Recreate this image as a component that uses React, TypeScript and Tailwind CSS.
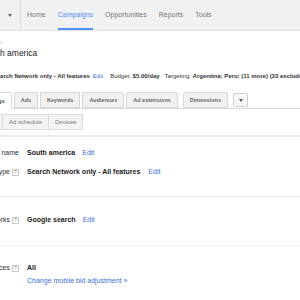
import React from 'react';

const tabs = ['Ads', 'Keywords', 'Audiences', 'Ad extensions', 'Dimensions'];
const navItems = ['Home', 'Campaigns', 'Opportunities', 'Reports', 'Tools'];

const Help: React.FC = () => (
    <span className="ml-[2px] inline-flex h-[7px] w-[7px] shrink-0 items-center justify-center border border-[#c8c8c8] bg-white text-[5px] leading-none text-[#888]">?</span>
);

const Caret: React.FC<{ color?: string }> = ({ color = 'border-t-[#666]' }) => (
    <span className={`inline-block h-0 w-0 border-x-[2px] border-t-[3px] border-x-transparent ${color}`}></span>
);

const SettingRow: React.FC<{ label: string; help?: boolean; children: React.ReactNode }> = ({ label, help, children }) => (
    <div className="flex h-[19px] items-center">
        <div className="ml-[-41px] flex w-[60px] shrink-0 items-center justify-end whitespace-nowrap text-[7px] text-[#333]">
            <span>{label}</span>
            {help && <Help />}
        </div>
        <div className="ml-[8px] flex items-center whitespace-nowrap text-[7px]">{children}</div>
    </div>
);

export default function App() {
    return (
        <div className="h-[300px] w-[300px] overflow-hidden bg-white font-['Liberation_Sans',Arial,sans-serif]">
            {/* top nav */}
            <header className="flex h-[31px] border-b border-[#e3e3e3] bg-[#f1f1f1]">
                <div className="flex w-[21px] shrink-0 items-center justify-center border-r border-[#dadada]">
                    <Caret />
                </div>
                <nav className="flex h-full text-[7px] text-[#777]">
                    {navItems.map((n) => (
                        <div key={n} className="flex h-full px-[6px]">
                            <span className={`flex h-full items-center ${n === 'Campaigns' ? 'border-b-2 border-[#4d90fe] pt-[2px] text-[#4d90fe]' : 'pt-[1px]'}`}>{n}</span>
                        </div>
                    ))}
                </nav>
            </header>

            {/* breadcrumb + title */}
            <div className="mt-[7px] h-[8px] text-[5px] leading-[8px] text-[#999]">›</div>
            <h1 className="ml-[-17.5px] mt-[1px] h-[12px] whitespace-nowrap text-[8.5px] leading-[12px] text-[#222]">South america</h1>

            {/* summary line */}
            <div className="ml-[-7.3px] mt-[12px] flex h-[10px] items-center whitespace-nowrap text-[6px] text-[#333]">
                <span className="font-bold">Search Network only - All features</span>
                <span className="ml-[3px] text-[#3a70d8]">Edit</span>
                <span className="ml-[7px]">Budget: <b>$5.00/day</b></span>
                <span className="ml-[5px]">Targeting: <b>Argentina; Peru; (11 more) (33 excluded)</b></span>
            </div>

            {/* tabs */}
            <div className="mt-[11px] flex h-[17px] items-end border-b border-[#d8d8d8]">
                <div className="ml-[-24px] flex h-[17px] items-end gap-[2px] whitespace-nowrap">
                    <div className="mb-[-1px] flex h-[17px] items-center rounded-t-[2px] border border-b-0 border-[#d8d8d8] bg-white px-[6px] text-[5.5px] font-bold text-[#444]">Settings</div>
                    {tabs.map((t) => (
                        <div key={t} className={`flex h-[16px] items-center rounded-t-[2px] border border-[#d8d8d8] bg-[#f1f1f1] px-[6px] text-[5.5px] font-bold text-[#666] ${t === 'Dimensions' ? 'ml-[3px]' : ''}`}>{t}</div>
                    ))}
                    <div className="mb-[1px] ml-[3px] flex h-[14px] w-[15px] items-center justify-center rounded-[2px] border border-[#d0d0d0] bg-[#f8f8f8]">
                        <Caret color="border-t-[#555]" />
                    </div>
                </div>
            </div>

            {/* sub tabs */}
            <div className="ml-[-36.7px] mt-[5px] flex h-[16px] whitespace-nowrap text-[6px] text-[#777]">
                <div className="flex items-center border border-[#dcdcdc] bg-[#f3f3f3] px-[6px]">Locations</div>
                <div className="flex items-center border border-l-0 border-[#dcdcdc] bg-[#f3f3f3] px-[6px]">Ad schedule</div>
                <div className="flex items-center border border-l-0 border-[#dcdcdc] bg-[#f3f3f3] px-[6px]">Devices</div>
            </div>

            {/* settings */}
            <div className="mt-[5px] border-t-2 border-[#eeeeee] pb-[14px] pt-[7px]">
                <SettingRow label="Campaign name">
                    <span className="font-bold text-[#222]">South america</span>
                    <span className="ml-[7px] text-[#3a70d8]">Edit</span>
                </SettingRow>
                <SettingRow label="Type" help>
                    <span className="font-bold text-[#222]">Search Network only - All features</span>
                    <span className="ml-[8px] text-[#3a70d8]">Edit</span>
                </SettingRow>
            </div>
            <div className="border-t border-[#eeeeee] pb-[15px] pt-[14px]">
                <SettingRow label="Networks" help>
                    <span className="font-bold text-[#222]">Google search</span>
                    <span className="ml-[7px] text-[#3a70d8]">Edit</span>
                </SettingRow>
            </div>
            <div className="border-t border-[#f2f2f2] pt-[13px]">
                <SettingRow label="Devices" help>
                    <span className="font-bold text-[#222]">All</span>
                </SettingRow>
                <div className="ml-[27px] mt-[-2px] whitespace-nowrap text-[7px] text-[#3a70d8]">Change mobile bid adjustment »</div>
            </div>
        </div>
    );
}
